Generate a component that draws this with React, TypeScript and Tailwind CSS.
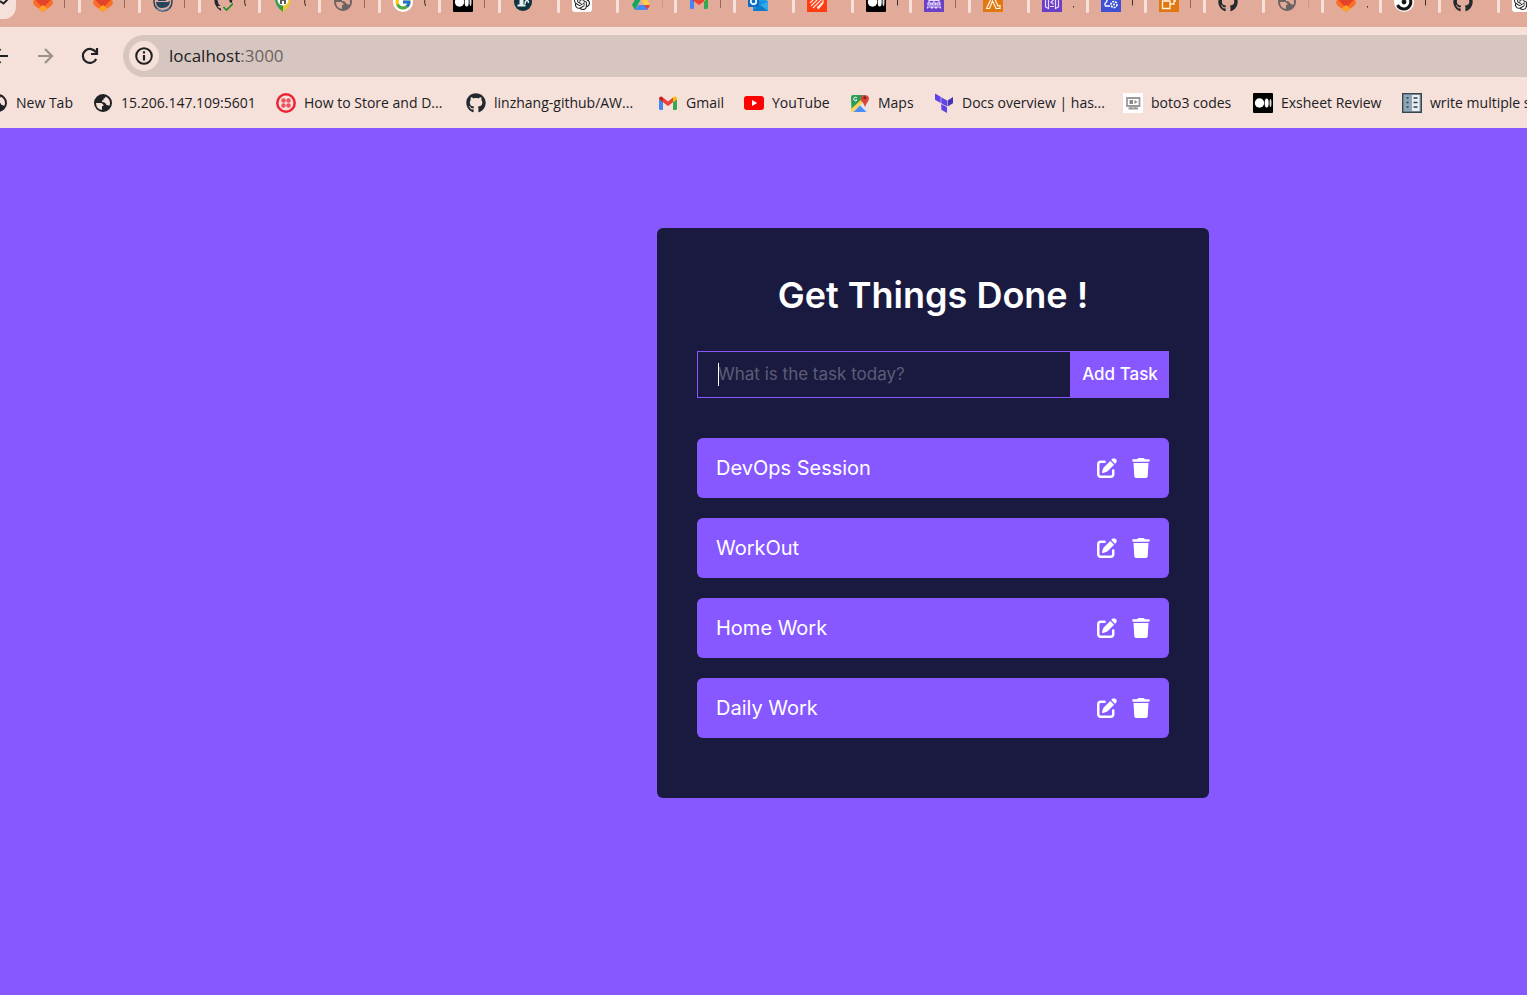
import React, { useState } from "react";
import { FaGithub, FaPenToSquare, FaTrash } from "react-icons/fa6";
import { FcGoogle } from "react-icons/fc";
import { SiOpenai } from "react-icons/si";

const svg = "block h-5 w-5 shrink-0";

function Gitlab() {
  return (
    <svg className={svg} viewBox="0 0 20 20">
      <path d="M0 11 L3 1 L6 7 H14 L17 1 L20 11 L18.500 13.500 L10 20 L1.500 13.500Z" fill="#fc6d26" />
      <path d="M2.500 8 H17.500 L10 16Z" fill="#e24329" />
      <path d="M5.500 16.500 L10 13 L14.500 16.500 L10 20Z" fill="#fca326" />
    </svg>
  );
}
function Docker() {
  return (
    <svg className={svg} viewBox="0 0 20 20">
      <circle cx="10" cy="10" r="9" fill="#e2aa98" stroke="#25465d" strokeWidth="1.500" />
      <path d="M3 10 H15 L17 8.500 Q17 16 9 16 Q3.500 16 3 10Z" fill="#25465d" />
      <path d="M5 9 V7 H7 V5 H11 V3 H13 V9Z" fill="#25465d" />
      <path d="M4 17 Q10 20 16 16" stroke="#7fa6bd" strokeWidth="1" fill="none" />
    </svg>
  );
}
function GithubCheck() {
  return (
    <svg className={svg} viewBox="0 0 20 20">
      <path d="M4 2 Q0 7 2.200 12.500 Q4 17 8 19 V16.500 Q5.500 16.500 4.500 14 L7.500 14 Q4.800 12 4.500 8Z" fill="#24292f" />
      <path d="M16 3 Q20 6 19 11 L16.500 10Z" fill="#24292f" />
      <path d="M10.500 15 L13.500 18 L20 11.500" stroke="#1a8f2e" strokeWidth="1.600" fill="none" />
    </svg>
  );
}
function Shield() {
  return (
    <svg className={svg} viewBox="0 0 20 20">
      <path d="M2 2 H10 V20 Q2 14 2 7Z" fill="#34a04c" />
      <path d="M18 2 H10 V20 Q18 14 18 7Z" fill="#e6c82f" />
      <circle cx="10" cy="8" r="5.500" fill="#fff" />
      <path d="M8 12 V6 H10 V9 M12 12 V7" stroke="#222" strokeWidth="1.500" fill="none" />
    </svg>
  );
}
function GoogleTab() {
  return (
    <span className="flex h-5 w-5 shrink-0 items-center justify-center rounded-full bg-white">
      <FcGoogle className="h-[18px] w-[18px]" />
    </span>
  );
}
function Medium() {
  return (
    <svg className={svg} viewBox="0 0 20 20">
      <rect width="20" height="20" rx="1" fill="#000" />
      <circle cx="6.500" cy="10" r="4.700" fill="#fff" />
      <ellipse cx="13.700" cy="10" rx="2" ry="4.500" fill="#fff" />
      <ellipse cx="17.500" cy="10" rx="1" ry="4" fill="#ddd" />
    </svg>
  );
}
function Reader() {
  return (
    <svg className={svg} viewBox="0 0 20 20">
      <circle cx="10" cy="10" r="9" fill="#0e3440" />
      <path d="M4.500 14.500 V12.500 H6.500 V7 H10.500 V12.500 H12.500 V14.500Z" fill="#e8f0f0" />
      <path d="M12 12 Q12 8.500 14 8.500 Q15.500 8.500 15.500 11" stroke="#e8f0f0" strokeWidth="1.500" fill="none" />
    </svg>
  );
}
function OpenAi() {
  return (
    <span className="flex h-5 w-5 shrink-0 items-center justify-center rounded-[3px] bg-white text-[#222]">
      <SiOpenai className="h-4 w-4" />
    </span>
  );
}
function Drive() {
  return (
    <svg className={svg} viewBox="0 0 20 20">
      <path d="M7 2 H13 L10 7 L4 18 L1 13Z" fill="#11a861" />
      <path d="M7 2 H13 L19 13 H13Z" fill="#ffcf48" />
      <path d="M7.500 13 H19 L16 18 H4Z" fill="#4688f4" />
      <path d="M13 13 H19 L16.500 17.500Z" fill="#ea4335" />
      <path d="M10 7.500 L13 13 H7Z" fill="#e2aa98" />
    </svg>
  );
}
function Gmail() {
  return (
    <svg className={svg} viewBox="0 0 20 20">
      <path d="M1 6 L5 9 V17 H2.500 Q1 17 1 15.500Z" fill="#4285f4" />
      <path d="M19 6 L15 9 V17 H17.500 Q19 17 19 15.500Z" fill="#34a853" />
      <path d="M1 6 Q1 3 3.500 3.600 L5 4.600 V9.200 L1 6.200Z" fill="#c5221f" />
      <path d="M19 6 Q19 3 16.500 3.600 L15 4.600 V9.200 L19 6.200Z" fill="#fbbc04" />
      <path d="M5 4.600 L10 8.400 L15 4.600 V9.200 L10 13 L5 9.200Z" fill="#ea4335" />
    </svg>
  );
}
function Outlook() {
  return (
    <svg className={svg} viewBox="0 0 20 20">
      <path d="M5 1 H19 V10 H5Z" fill="#28a8ea" />
      <path d="M5 8 L20 9 V19 H5Z" fill="#1490df" />
      <path d="M20 9 V19 L12 13.500Z" fill="#32a9e8" />
      <path d="M5 19 L12 13 L20 19Z" fill="#0f78c9" />
      <rect y="4" width="11" height="11" rx="1" fill="#0a6cc4" />
      <circle cx="5.500" cy="9.500" r="2.700" fill="none" stroke="#fff" strokeWidth="1.700" />
    </svg>
  );
}
function RedStripes() {
  return (
    <svg className={svg} viewBox="0 0 20 20">
      <rect width="20" height="20" fill="#ff3c12" />
      <path d="M3 11 L11 3 M4 14 L14 4 M6 16 L16 6 M10 16 L16 10 M3 7 L7 3 M16 5 V11 L11 17" stroke="#ffe5dc" strokeWidth="1.200" fill="none" />
    </svg>
  );
}
function AwsNetwork() {
  return (
    <svg className={svg} viewBox="0 0 20 20">
      <rect width="20" height="20" fill="#6b42c4" />
      <path d="M7 3 H13 V8 H7Z M5 11 V8.500 H15 V11 M10 8 V11 M4 11 H7 V13 H4Z M8.500 11 H11.500 V13 H8.500Z M13 11 H16 V13 H13Z M3.500 16.500 V15 H7.500 V16.500 M8.500 16.500 V15 H11.500 V16.500 M12.500 16.500 V15 H16.500 V16.500" stroke="#eadcff" strokeWidth="1.200" fill="none" />
    </svg>
  );
}
function AwsLambda() {
  return (
    <svg className={svg} viewBox="0 0 20 20">
      <rect width="20" height="20" fill="#e0770f" />
      <path d="M6 3 H10 L15 14 L17 13.500 V16.500 H13 L9.500 9 L6.500 16.500 H3.500 L8.500 6 H6Z" stroke="#fff3e2" strokeWidth="1.200" fill="none" />
    </svg>
  );
}
function AwsGateway() {
  return (
    <svg className={svg} viewBox="0 0 20 20">
      <rect width="20" height="20" fill="#6a3fc8" />
      <path d="M6.500 3 V16.500 L3.500 15 V4Z M13.500 3 V16.500 L16.500 15 V4Z M8 14.500 H12 M8 6 H12 M11.500 8 L9 10.200 L11.500 12.300" stroke="#eadcff" strokeWidth="1.200" fill="none" />
    </svg>
  );
}
function AwsManage() {
  return (
    <svg className={svg} viewBox="0 0 20 20">
      <rect width="20" height="20" fill="#3f51d2" />
      <path d="M9 14 H4.500 Q3 11.500 5.500 10 Q7 4 11 5 Q13 6 13.500 8" stroke="#fff" strokeWidth="1.300" fill="none" />
      <circle cx="13" cy="12.500" r="3" stroke="#fff" strokeWidth="1.600" strokeDasharray="2 1" fill="none" />
      <circle cx="13" cy="12.500" r="1" fill="#fff" />
    </svg>
  );
}
function AwsCompute() {
  return (
    <svg className={svg} viewBox="0 0 20 20">
      <rect width="20" height="20" fill="#e0770f" />
      <path d="M7 9 V4 H15 V12 H11 M3.500 9 H11 V16.500 H3.500Z M15 6 H17 M15 9 H17" stroke="#fff3e2" strokeWidth="1.300" fill="none" />
    </svg>
  );
}
function CircleCi() {
  return (
    <svg className={svg} viewBox="0 0 20 20">
      <circle cx="10" cy="10" r="10" fill="#fff" />
      <circle cx="10" cy="10" r="2.400" fill="#161616" />
      <path d="M3.500 7 A7 7 0 1 1 3.500 13" fill="none" stroke="#161616" strokeWidth="3" />
    </svg>
  );
}
function Github() {
  return <FaGithub className="h-5 w-5 shrink-0 text-[#24292f]" />;
}
function GlobeShape({ tone }: { tone: string }) {
  return (
    <svg className={`${svg} ${tone}`} viewBox="0 0 20 20">
      <path
        fill="currentColor"
        fillRule="evenodd"
        d="M10 1 A9 9 0 1 0 10 19 A9 9 0 1 0 10 1Z M3 10 H7.500 Q10.500 10.300 10.500 13 H9 V16.900 Q3.200 16.300 3 10Z M12.500 3.500 Q17 5.500 17 10 Q17 11.500 16.200 13 Q15.500 12 13.500 12 Q12.500 9 9 9 Q8.500 7 10.500 7 V5.500 Q12.500 5.500 12.500 3.500Z"
      />
    </svg>
  );
}
function GlobeGray() {
  return <GlobeShape tone="text-[#6b6462]" />;
}
function Globe() {
  return <GlobeShape tone="text-[#202124]" />;
}
function Twilio() {
  return (
    <svg className={svg} viewBox="0 0 20 20">
      <circle cx="10" cy="10" r="8.700" fill="none" stroke="#ee2435" strokeWidth="2.500" />
      <g fill="#f0505c">
        <circle cx="7.500" cy="7.500" r="2.200" />
        <circle cx="12.500" cy="7.500" r="2.200" />
        <circle cx="7.500" cy="12.500" r="2.200" />
        <circle cx="12.500" cy="12.500" r="2.200" />
      </g>
    </svg>
  );
}
function YouTube() {
  return (
    <svg className={svg} viewBox="0 0 20 20">
      <rect y="3" width="20" height="14" rx="3" fill="#f00" />
      <path d="M8 7 L13.200 10 L8 13Z" fill="#fff" />
    </svg>
  );
}
function Maps() {
  return (
    <svg className={svg} viewBox="0 0 20 20">
      <rect x="1" y="2" width="17" height="17" rx="2" fill="#e5e5e5" />
      <path d="M1 4 Q1 2 3 2 H13 L14 6 L1.500 18Z" fill="#2a9d58" />
      <path d="M1 16 L13 5 L15 7 L3 19 H2 Q1 18 1 17Z" fill="#fdd34d" />
      <path d="M3.500 19 L10 12.500 L16.500 19Z" fill="#4c8df5" />
      <path d="M10.500 5 A4.500 4.500 0 0 1 19 5 Q19 8 16.500 10.500 L15 14 L13.500 10.500 Q10.500 8 10.500 5Z" fill="#dc4437" />
      <circle cx="14.800" cy="4.800" r="1.500" fill="#7b231e" />
      <path d="M6.800 4.800 A1.800 1.800 0 1 0 7 7 H5.500" stroke="#fff" strokeWidth="1" fill="none" />
    </svg>
  );
}
function Terraform() {
  return (
    <svg className={svg} viewBox="0 0 20 20">
      <path d="M1 0.500 L6.700 3.800 V10 L1 6.700Z M7.300 4.200 L13 7.500 V13.500 L7.300 10.300Z M7.300 11 L13 14.300 V20 L7.300 16.800Z" fill="#5f43e9" />
      <path d="M19 4 L13.600 7.500 V13.500 L19 10.300Z" fill="#4634b5" />
    </svg>
  );
}
function Boto() {
  return (
    <svg className={svg} viewBox="0 0 20 20">
      <rect width="20" height="20" fill="#fff" />
      <path d="M4 5 H16.500 V13 H4Z M8 13 V15.500 M12.500 13 V15.500 M5.500 15.500 H15" stroke="#999" strokeWidth="1.800" fill="none" />
      <path d="M6.500 7 H10 V11 H6.500Z M11.500 7 L14.500 9 L11.500 11Z" fill="#888" />
    </svg>
  );
}
function Columns() {
  return (
    <svg className={svg} viewBox="0 0 20 20">
      <rect x="0.700" y="0.700" width="18.600" height="18.600" fill="#8fa5b5" stroke="#37474f" strokeWidth="1.400" />
      <rect x="10" y="2" width="7.500" height="16" fill="#eceff1" />
      <path d="M4.500 5 H6.500 M4.500 9.500 H6.500 M4.500 14 H6.500 M11.500 5 H15.500 M11.500 9.500 H15.500 M11.500 14 H15.500" stroke="#2c3e49" strokeWidth="1.600" />
    </svg>
  );
}

function LineIcon({ d, children }: { d: string; children?: React.ReactNode }) {
  return (
    <svg className="block h-6 w-6" viewBox="0 0 24 24" fill="none" stroke="currentColor" strokeWidth="2.200">
      <path d={d} />
      {children}
    </svg>
  );
}

type Mark = "bar" | "faint" | "curve" | "dot" | "tick" | "none";
type Tab = { icon: () => React.ReactElement; mark: Mark };

const wideTabs: Tab[] = [
  { icon: Gitlab, mark: "bar" },
  { icon: Gitlab, mark: "bar" },
  { icon: Docker, mark: "bar" },
  { icon: GithubCheck, mark: "curve" },
  { icon: Shield, mark: "curve" },
  { icon: GlobeGray, mark: "bar" },
  { icon: GoogleTab, mark: "curve" },
  { icon: Medium, mark: "bar" },
];
const fluidTabs: Tab[] = [
  { icon: Reader, mark: "none" },
  { icon: OpenAi, mark: "none" },
  { icon: Drive, mark: "faint" },
  { icon: Gmail, mark: "bar" },
  { icon: Outlook, mark: "none" },
  { icon: RedStripes, mark: "none" },
  { icon: Medium, mark: "tick" },
  { icon: AwsNetwork, mark: "bar" },
  { icon: AwsLambda, mark: "none" },
  { icon: AwsGateway, mark: "dot" },
  { icon: AwsManage, mark: "tick" },
  { icon: AwsCompute, mark: "bar" },
  { icon: Github, mark: "none" },
  { icon: GlobeGray, mark: "faint" },
  { icon: Gitlab, mark: "dot" },
  { icon: CircleCi, mark: "tick" },
  { icon: Github, mark: "none" },
];

const markPaths: Record<Mark, string> = {
  bar: "M1.500 0 V16",
  faint: "M1.500 0 V16",
  curve: "M2.500 6 Q0.500 10 2.500 14",
  dot: "M1.500 14 V15.500",
  tick: "M1.500 4 V13.500",
  none: "",
};

function TabItem({ tab, className }: { tab: Tab; className: string }) {
  const Icon = tab.icon;
  const tone = tab.mark === "faint" ? "#c99887" : tab.mark === "bar" ? "#94695c" : "#3a2f2c";
  return (
    <div className={`flex min-w-0 items-start overflow-hidden pl-3 ${className}`}>
      <Icon />
      <svg className="ml-2.5 block h-4 w-1 shrink-0" viewBox="0 0 4 16">
        <path d={markPaths[tab.mark]} stroke={tone} strokeWidth="1" fill="none" />
      </svg>
      <span className="ml-auto h-[21px] w-[3px] shrink-0 rounded-b-sm bg-[#f5e0da]" />
    </div>
  );
}

const bookmarks = [
  { label: "New Tab", icon: Globe, width: "w-[105px]" },
  { label: "15.206.147.109:5601", icon: Globe, width: "w-[183px]" },
  { label: "How to Store and D...", icon: Twilio, width: "w-[190px]" },
  { label: "linzhang-github/AW...", icon: Github, width: "w-[192px]" },
  { label: "Gmail", icon: Gmail, width: "w-[86px]" },
  { label: "YouTube", icon: YouTube, width: "w-[106px]" },
  { label: "Maps", icon: Maps, width: "w-[84px]" },
  { label: "Docs overview | has...", icon: Terraform, width: "w-[189px]" },
  { label: "boto3 codes", icon: Boto, width: "w-[130px]" },
  { label: "Exsheet Review", icon: Medium, width: "w-[149px]" },
  { label: "write multiple s", icon: Columns, width: "w-[125px]" },
];

function BrowserChrome() {
  return (
    <header className="overflow-hidden bg-[#f5e0da] font-['Open_Sans',sans-serif] text-[#202124]">
      <div className="h-[27px] overflow-hidden bg-[#e2aa98]">
        <div className="-mt-2 flex">
          <div className="flex h-[27px] w-4 shrink-0 items-start overflow-hidden rounded-br-xl bg-[#f5e0da]">
            <svg className="block h-5 w-4" viewBox="0 0 16 20">
              <path d="M0 9 L3.500 11.500 L11 4" stroke="#222" strokeWidth="2" fill="none" />
            </svg>
          </div>
          <div className="ml-[5px] flex shrink-0">
            {wideTabs.map((tab, i) => (
              <TabItem key={i} tab={tab} className="w-[60px]" />
            ))}
          </div>
          <div className="flex min-w-0 flex-1">
            {fluidTabs.map((tab, i) => (
              <TabItem key={i} tab={tab} className="flex-1" />
            ))}
            <TabItem tab={{ icon: OpenAi, mark: "none" }} className="w-[27px] shrink-0" />
          </div>
        </div>
      </div>
      <div className="flex items-center pt-2">
        <nav className="-ml-3 flex w-[135px] shrink-0 items-center">
          <button type="button" aria-label="Back">
            <LineIcon d="M20 12 H6 M12.500 5 L5.500 12 L12.500 19" />
          </button>
          <button type="button" aria-label="Forward" className="ml-[21px] text-[#9c908d]">
            <LineIcon d="M5 12 H19 M12 5 L19 12 L12 19" />
          </button>
          <button type="button" aria-label="Reload" className="ml-[21px]">
            <LineIcon d="M18.200 15 A7 7 0 1 1 18 8.500 M19 4 V10 H13" />
          </button>
        </nav>
        <div className="flex h-[42px] flex-1 items-center rounded-l-full bg-[#d7c6bf] pl-1.5">
          <button type="button" aria-label="Site information" className="flex h-[30px] w-[30px] items-center justify-center rounded-full bg-[#f5e0da]">
            <LineIcon d="M12 11 V16.500 M12 7.200 V9.400">
              <circle cx="12" cy="12" r="7.800" strokeWidth="2" />
            </LineIcon>
          </button>
          <p className="ml-2.5 text-[17px] leading-6">
            localhost<span className="text-[#6b6462]">:3000</span>
          </p>
        </div>
      </div>
      <nav className="-ml-3 flex h-[51px] items-center">
        {bookmarks.map(({ label, icon: Icon, width }) => (
          <a key={label} href="#" className={`flex shrink-0 items-center gap-2 whitespace-nowrap text-sm ${width}`}>
            <Icon />
            {label}
          </a>
        ))}
      </nav>
    </header>
  );
}

function TodoCard() {
  const [tasks, setTasks] = useState(["DevOps Session", "WorkOut", "Home Work", "Daily Work"]);
  const [value, setValue] = useState("");
  const addTask = (e: React.FormEvent) => {
    e.preventDefault();
    if (!value.trim()) return;
    setTasks([...tasks, value]);
    setValue("");
  };
  return (
    <section className="w-full max-w-[552px] rounded-md bg-[#1a1a40] px-10 pt-10 pb-[60px] text-white">
      <h1 className="mb-7 text-center text-4xl leading-[55px] font-semibold">Get Things Done !</h1>
      <form onSubmit={addTask} className="mb-10 flex h-[47px]">
        <div className="relative flex-1">
          <input
            aria-label="What is the task today?"
            placeholder="What is the task today?"
            value={value}
            onChange={(e) => setValue(e.target.value)}
            className="h-full w-full border border-[#8758ff] bg-transparent px-5 pb-0.5 text-[17px] text-white outline-none placeholder:text-[#5d5c77]"
          />
          {value === "" && <span className="absolute top-3 left-[21px] h-[23px] w-px bg-white" />}
        </div>
        <button type="submit" className="w-[98px] bg-[#8758ff] text-[17px] font-medium whitespace-nowrap">
          Add Task
        </button>
      </form>
      <ul className="flex flex-col gap-5">
        {tasks.map((task, i) => (
          <li key={i} className="flex h-[60px] items-center justify-between rounded-md bg-[#8758ff] px-[19px]">
            <p className="text-xl">{task}</p>
            <div className="flex items-center gap-[15px]">
              <button type="button" aria-label={`Edit ${task}`}>
                <FaPenToSquare className="h-5 w-5" />
              </button>
              <button type="button" aria-label={`Delete ${task}`} onClick={() => setTasks(tasks.filter((_, n) => n !== i))}>
                <FaTrash className="h-5 w-[18px]" />
              </button>
            </div>
          </li>
        ))}
      </ul>
    </section>
  );
}

export default function App() {
  return (
    <div className="flex min-h-screen flex-col bg-[#8758ff]">
      <BrowserChrome />
      <main className="flex flex-1 items-start justify-center pt-[100px] pb-10 pl-[339px] font-['Inter',sans-serif]">
        <TodoCard />
      </main>
    </div>
  );
}
